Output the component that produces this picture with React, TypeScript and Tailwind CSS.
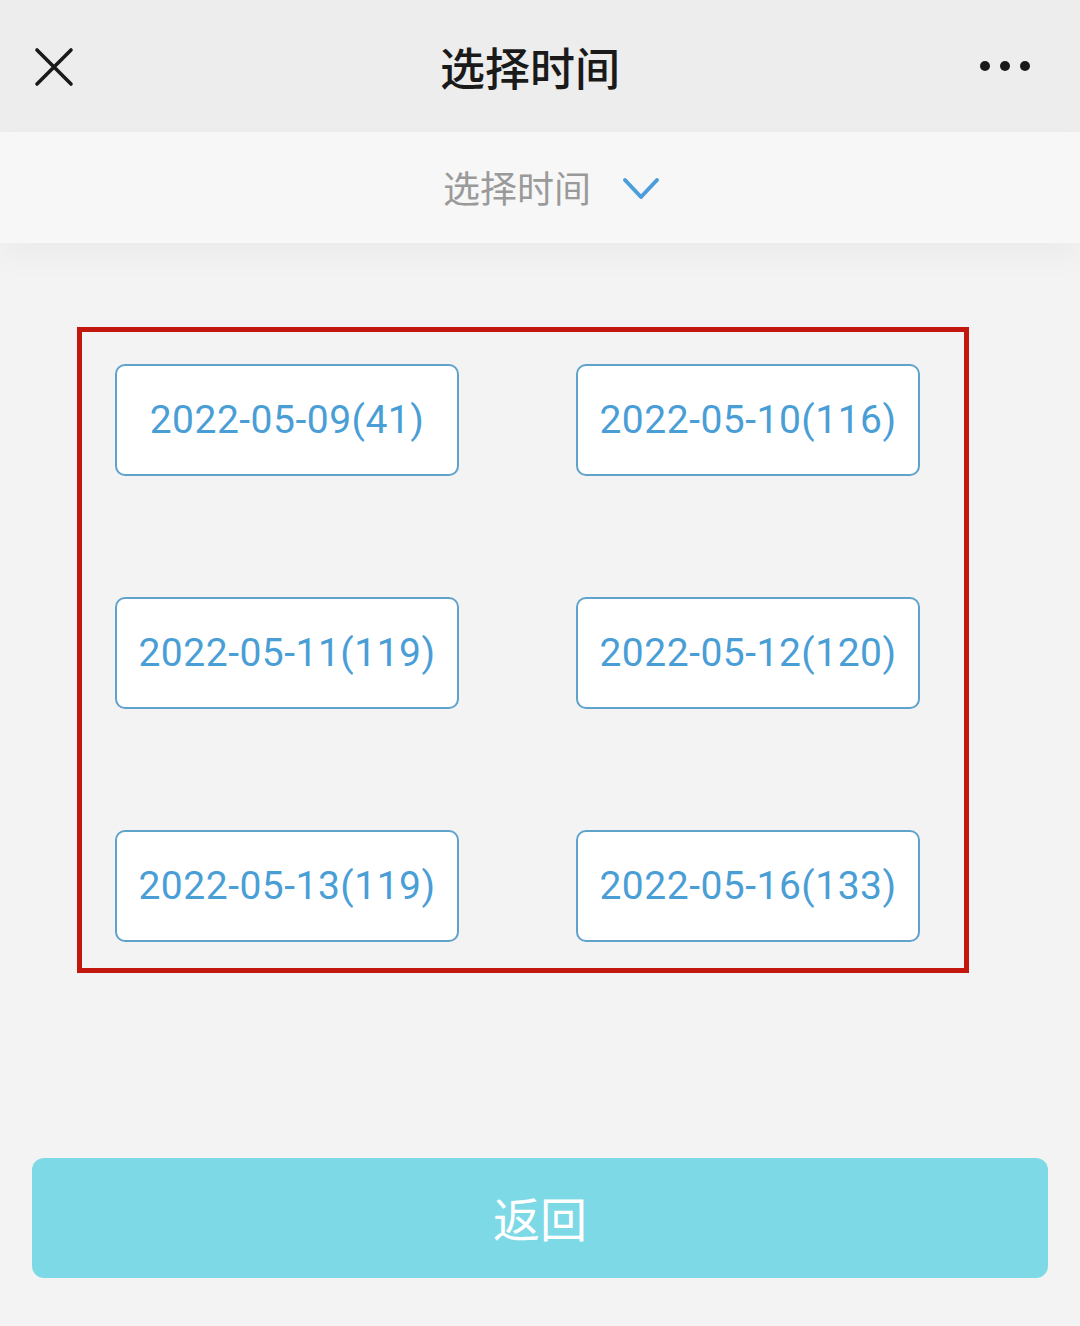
import React from "react";

const dates = [
  "2022-05-09(41)",
  "2022-05-10(116)",
  "2022-05-11(119)",
  "2022-05-12(120)",
  "2022-05-13(119)",
  "2022-05-16(133)",
];

const cjk = "font-['Noto_Sans_CJK_SC','Noto_Sans',sans-serif]";

export default function App() {
  return (
    <div className={`flex min-h-[1326px] w-[1080px] flex-col bg-[#f3f3f3] ${cjk}`}>
      {/* top bar */}
      <header className="flex h-[132px] items-center justify-between bg-[#ededed] pl-[34px] pr-[50px]">
        <svg width="40" height="40" viewBox="0 0 40 40" className="mt-[2px]">
          <path d="M3 3 L37 37 M37 3 L3 37" stroke="#1a1a1a" strokeWidth="3.6" strokeLinecap="round" />
        </svg>
        <h1 className="ml-[6px] text-[45px] font-medium leading-none text-[#1a1a1a]">选择时间</h1>
        <div className="flex w-[50px] items-center justify-between">
          <span className="size-[10px] rounded-full bg-[#1a1a1a]" />
          <span className="size-[10px] rounded-full bg-[#1a1a1a]" />
          <span className="size-[10px] rounded-full bg-[#1a1a1a]" />
        </div>
      </header>

      {/* picker bar */}
      <div className="relative z-10 flex h-[111px] items-center justify-center gap-[30px] bg-[#f7f7f7] shadow-[0_14px_30px_rgba(0,0,0,0.035)]">
        <span className="ml-[24px] text-[37px] leading-none text-[#9a9a9a]">选择时间</span>
        <svg width="40" height="26" viewBox="0 0 40 26" className="mt-[2px]">
          <path d="M4 4 L20 21 L36 4" fill="none" stroke="#4a9ed9" strokeWidth="4" strokeLinecap="round" strokeLinejoin="round" />
        </svg>
      </div>

      {/* date grid */}
      <div className="pl-[77px] pt-[84px]">
        <div className="grid w-[892px] grid-cols-[344px_344px] gap-x-[117px] gap-y-[121px] border-[5px] border-[#c2160f] pb-[26px] pl-[33px] pt-[32px]">
          {dates.map((d) => (
            <button
              key={d}
              type="button"
              className="flex h-[112px] items-center justify-center rounded-[10px] border-2 border-[#5fa2cc] bg-white font-['Roboto',sans-serif] text-[39px] tracking-[0.5px] text-[#4a9ed6]"
            >
              {d}
            </button>
          ))}
        </div>
      </div>

      <div className="flex-1" />

      {/* bottom action */}
      <div className="px-[32px] pb-[48px]">
        <button
          type="button"
          className="flex h-[120px] w-[1016px] items-center justify-center rounded-[12px] bg-[#7dd9e6] pb-[4px] text-[47px] leading-none text-white"
        >
          返回
        </button>
      </div>
    </div>
  );
}
